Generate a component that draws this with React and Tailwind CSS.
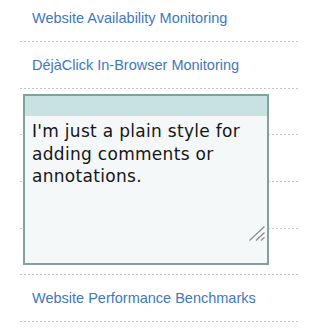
import React from 'react';

const links = [
  'Website Availability Monitoring',
  'DéjàClick In-Browser Monitoring',
  '',
  '',
  '',
  '',
  'Website Performance Benchmarks',
];

function Row({ label }) {
  return (
    <div className="flex h-[46.6px] flex-col">
      <div className="flex flex-1 items-center pl-3">
        {label && (
          <a
            href="#"
            className="text-[14.5px] leading-none text-[#4277c0] [font-family:'Liberation_Sans',Arial,sans-serif]"
          >
            {label}
          </a>
        )}
      </div>
      <div className="h-px bg-[linear-gradient(to_right,#c4c4c4_2px,transparent_2px)] bg-[length:4px_1px]" />
    </div>
  );
}

function NoteBox() {
  return (
    <div className="absolute left-[23px] top-[94px] flex h-[171px] w-[246px] flex-col border-2 border-[#83a19e] bg-[#f4f8f9]">
      <div className="h-[20px] bg-[#c7e2e0]" />
      <p className="px-[7px] pt-[4px] text-[17px] leading-[22.5px] tracking-[0.3px] text-[#161616] [font-family:'DejaVu_Sans',Verdana,sans-serif]">
        I'm just a plain style for adding comments or annotations.
      </p>
      <svg
        className="absolute bottom-[22px] right-[2px]"
        width="16"
        height="15"
        viewBox="0 0 16 15"
        fill="none"
        stroke="#8c8c8c"
        strokeWidth="1.2"
      >
        <line x1="0.5" y1="14.5" x2="15.5" y2="0.5" />
        <line x1="7" y1="14.5" x2="15.5" y2="6.5" />
        <line x1="12" y1="14.5" x2="15.5" y2="11.2" />
      </svg>
    </div>
  );
}

export default function App() {
  return (
    <div className="relative h-[333px] w-[300px] overflow-hidden bg-white">
      <div className="-mt-[4.3px] pl-[20px]">
        {links.map((label, i) => (
          <Row key={i} label={label} />
        ))}
      </div>
      <NoteBox />
    </div>
  );
}
